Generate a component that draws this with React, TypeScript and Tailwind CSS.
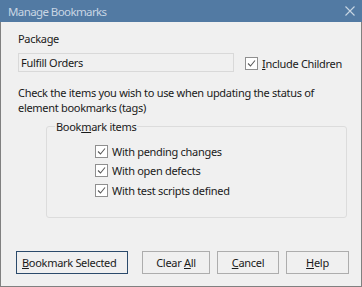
function Check({ label, u }: { label: string; u?: number }) {
  return (
    <label className="flex items-center gap-[4px] h-[19.5px] whitespace-nowrap">
      <span className="w-[13px] h-[13px] shrink-0 border border-[#8f8f8f] bg-white flex items-center justify-center">
        <svg width="9" height="9" viewBox="0 0 9 9">
          <path d="M1 4.5 L3.5 7 L8 1.5" fill="none" stroke="#5a5a5a" strokeWidth="1.1" />
        </svg>
      </span>
      <span>
        {u === undefined ? (
          label
        ) : (
          <>
            {label.slice(0, u)}
            <span className="underline">{label[u]}</span>
            {label.slice(u + 1)}
          </>
        )}
      </span>
    </label>
  );
}

function Btn({ children, primary, w }: { children: React.ReactNode; primary?: boolean; w: string }) {
  return (
    <button
      className={
        primary
          ? `h-[23px] ${w} border border-[#2b4a6b] bg-[#f0f0f0] whitespace-nowrap text-left pl-[5px]`
          : `h-[23px] ${w} border border-[#adadad] bg-[#f0f0f0] whitespace-nowrap`
      }
    >
      {children}
    </button>
  );
}

export default function App() {
  return (
    <div
      className="w-[362px] h-[287px] bg-[#f0f0f0] text-[11px] tracking-[-0.3px] leading-[15px] text-[#1a1a1a] flex flex-col"
      style={{ fontFamily: '"Noto Sans", "Open Sans", sans-serif' }}
    >
      <div className="h-[22px] bg-[#527aa3] flex items-center justify-between pl-[8px] pr-[7px] shrink-0">
        <span className="text-[#c9d6e3] text-[11.5px] tracking-[-0.6px]">Manage Bookmarks</span>
        <svg width="10" height="10" viewBox="0 0 10 10">
          <path d="M0.5 0.5 L9.5 9.5 M9.5 0.5 L0.5 9.5" stroke="#c9d6e3" strokeWidth="1.1" />
        </svg>
      </div>
      <div className="flex-1 border-x border-b border-[#808080] flex flex-col pl-[17px] pr-[12px]">
        <div className="mt-[9px]">Package</div>
        <div className="mt-[6px] flex items-center">
          <div className="w-[216px] h-[19px] border border-[#d9d9d9] pl-[2px] flex items-center">
            Fulfill Orders
          </div>
          <div className="ml-[11px] mt-[2px]">
            <Check label="Include Children" u={0} />
          </div>
        </div>
        <p className="mt-[11px] whitespace-nowrap">
          Check the items you wish to use when updating the status of
          <br />
          element bookmarks (tags)
        </p>
        <fieldset className="mt-[5px] ml-[28px] mr-[2px] h-[98px] border border-[#dcdcdc] rounded-[3px] px-[8px]">
          <legend className="px-[1px] leading-[14px]">
            Book<span className="underline">m</span>ark items
          </legend>
          <div className="ml-[40px] mt-[8px] flex flex-col">
            <Check label="With pending changes" />
            <Check label="With open defects" />
            <Check label="With test scripts defined" />
          </div>
        </fieldset>
        <div className="mt-auto mb-[12px] flex items-center -ml-[2px]">
          <Btn primary w="w-[113px]">
            <span className="underline">B</span>ookmark Selected
          </Btn>
          <div className="ml-[14px]">
            <Btn w="w-[68px]">
              Clear <span className="underline">A</span>ll
            </Btn>
          </div>
          <div className="ml-[7px]">
            <Btn w="w-[62px]">
              <span className="underline">C</span>ancel
            </Btn>
          </div>
          <div className="ml-[7px]">
            <Btn w="w-[63px]">
              <span className="underline">H</span>elp
            </Btn>
          </div>
        </div>
      </div>
    </div>
  );
}
